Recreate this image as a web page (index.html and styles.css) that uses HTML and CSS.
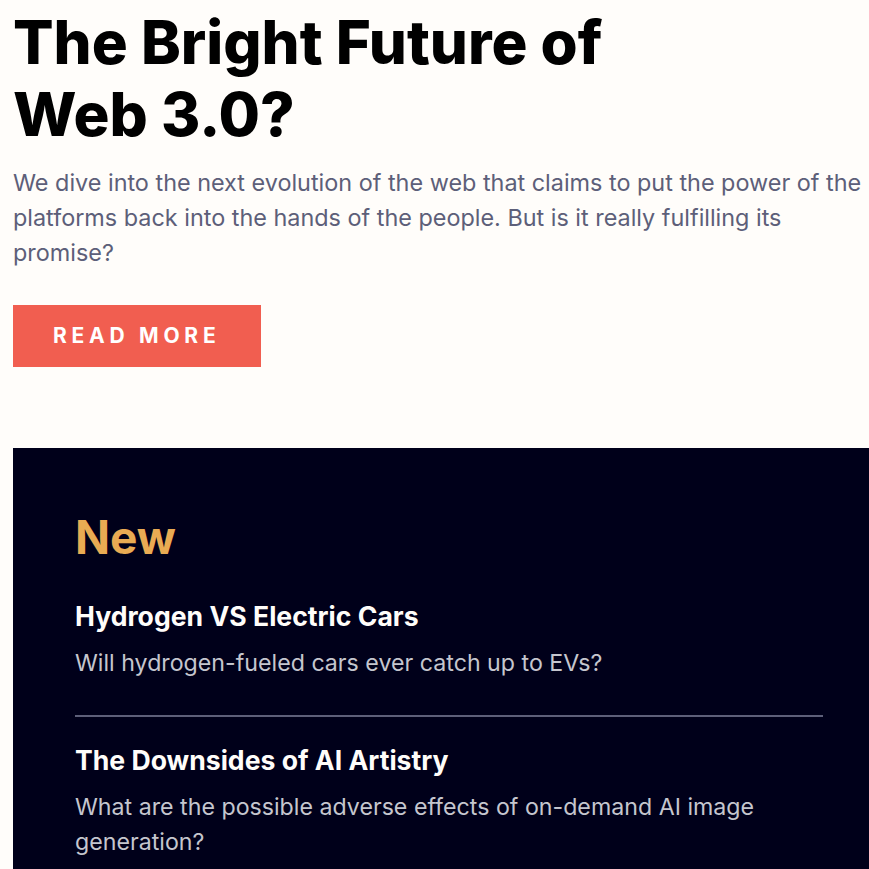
FILE: index.html
```html
<!DOCTYPE html>
<html lang="en">
<head>
<meta charset="utf-8">
<title>The Bright Future of Web 3.0?</title>
<link rel="stylesheet" href="styles.css">
</head>
<body>
<main class="page">
  <section class="hero">
    <h1 class="hero-title">The Bright Future of<br>Web 3.0?</h1>
    <p class="hero-text">We dive into the next evolution of the web that claims to put the power of the platforms back into the hands of the people. But is it really fulfilling its promise?</p>
    <a class="btn" href="#">Read more</a>
  </section>
  <aside class="new">
    <h2 class="new-title">New</h2>
    <article class="item">
      <h3 class="item-title">Hydrogen VS Electric Cars</h3>
      <p class="item-text">Will hydrogen-fueled cars ever catch up to EVs?</p>
    </article>
    <hr class="divider">
    <article class="item">
      <h3 class="item-title">The Downsides of AI Artistry</h3>
      <p class="item-text">What are the possible adverse effects of on-demand AI image generation?</p>
    </article>
  </aside>
</main>
</body>
</html>
```
FILE: styles.css
```css
* { box-sizing: border-box; }
html, body { margin: 0; padding: 0; }
body {
  background: #fffdfa;
  font-family: Inter, "Noto Sans", sans-serif;
  overflow: hidden;
}
.page {
  padding-left: 13px;
}
.hero-title {
  margin: 6px 0 0;
  font-size: 60px;
  line-height: 72px;
  font-weight: 800;
  color: #000;
}
.hero-text {
  margin: 15px 0 0;
  font-size: 23.4px;
  line-height: 35px;
  color: #5d5f79;
}
.btn {
  display: inline-block;
  margin-top: 35px;
  width: 248px;
  height: 62px;
  padding-left: 40px;
  background: #f15e50;
  color: #fff;
  text-decoration: none;
  text-transform: uppercase;
  font-weight: 700;
  font-size: 21px;
  letter-spacing: 4.75px;
  line-height: 62px;
}
.new {
  margin-top: 81px;
  background: #00001a;
  padding: 62px 46px 62px 62px;
}
.new-title {
  margin: 0;
  font-size: 46px;
  line-height: 55px;
  font-weight: 700;
  color: #e9ab53;
}
.item { margin-top: 36px; }
.divider + .item { margin-top: 28px; }
.item-title {
  margin: 0;
  font-size: 26.6px;
  line-height: 30px;
  font-weight: 700;
  color: #fffdfa;
}
.item-text {
  margin: 15px 0 0;
  font-size: 23.2px;
  line-height: 35px;
  color: #c5c6ce;
}
.divider {
  margin: 34px 0 0;
  border: 0;
  height: 2px;
  background: #5d5f79;
}
```
